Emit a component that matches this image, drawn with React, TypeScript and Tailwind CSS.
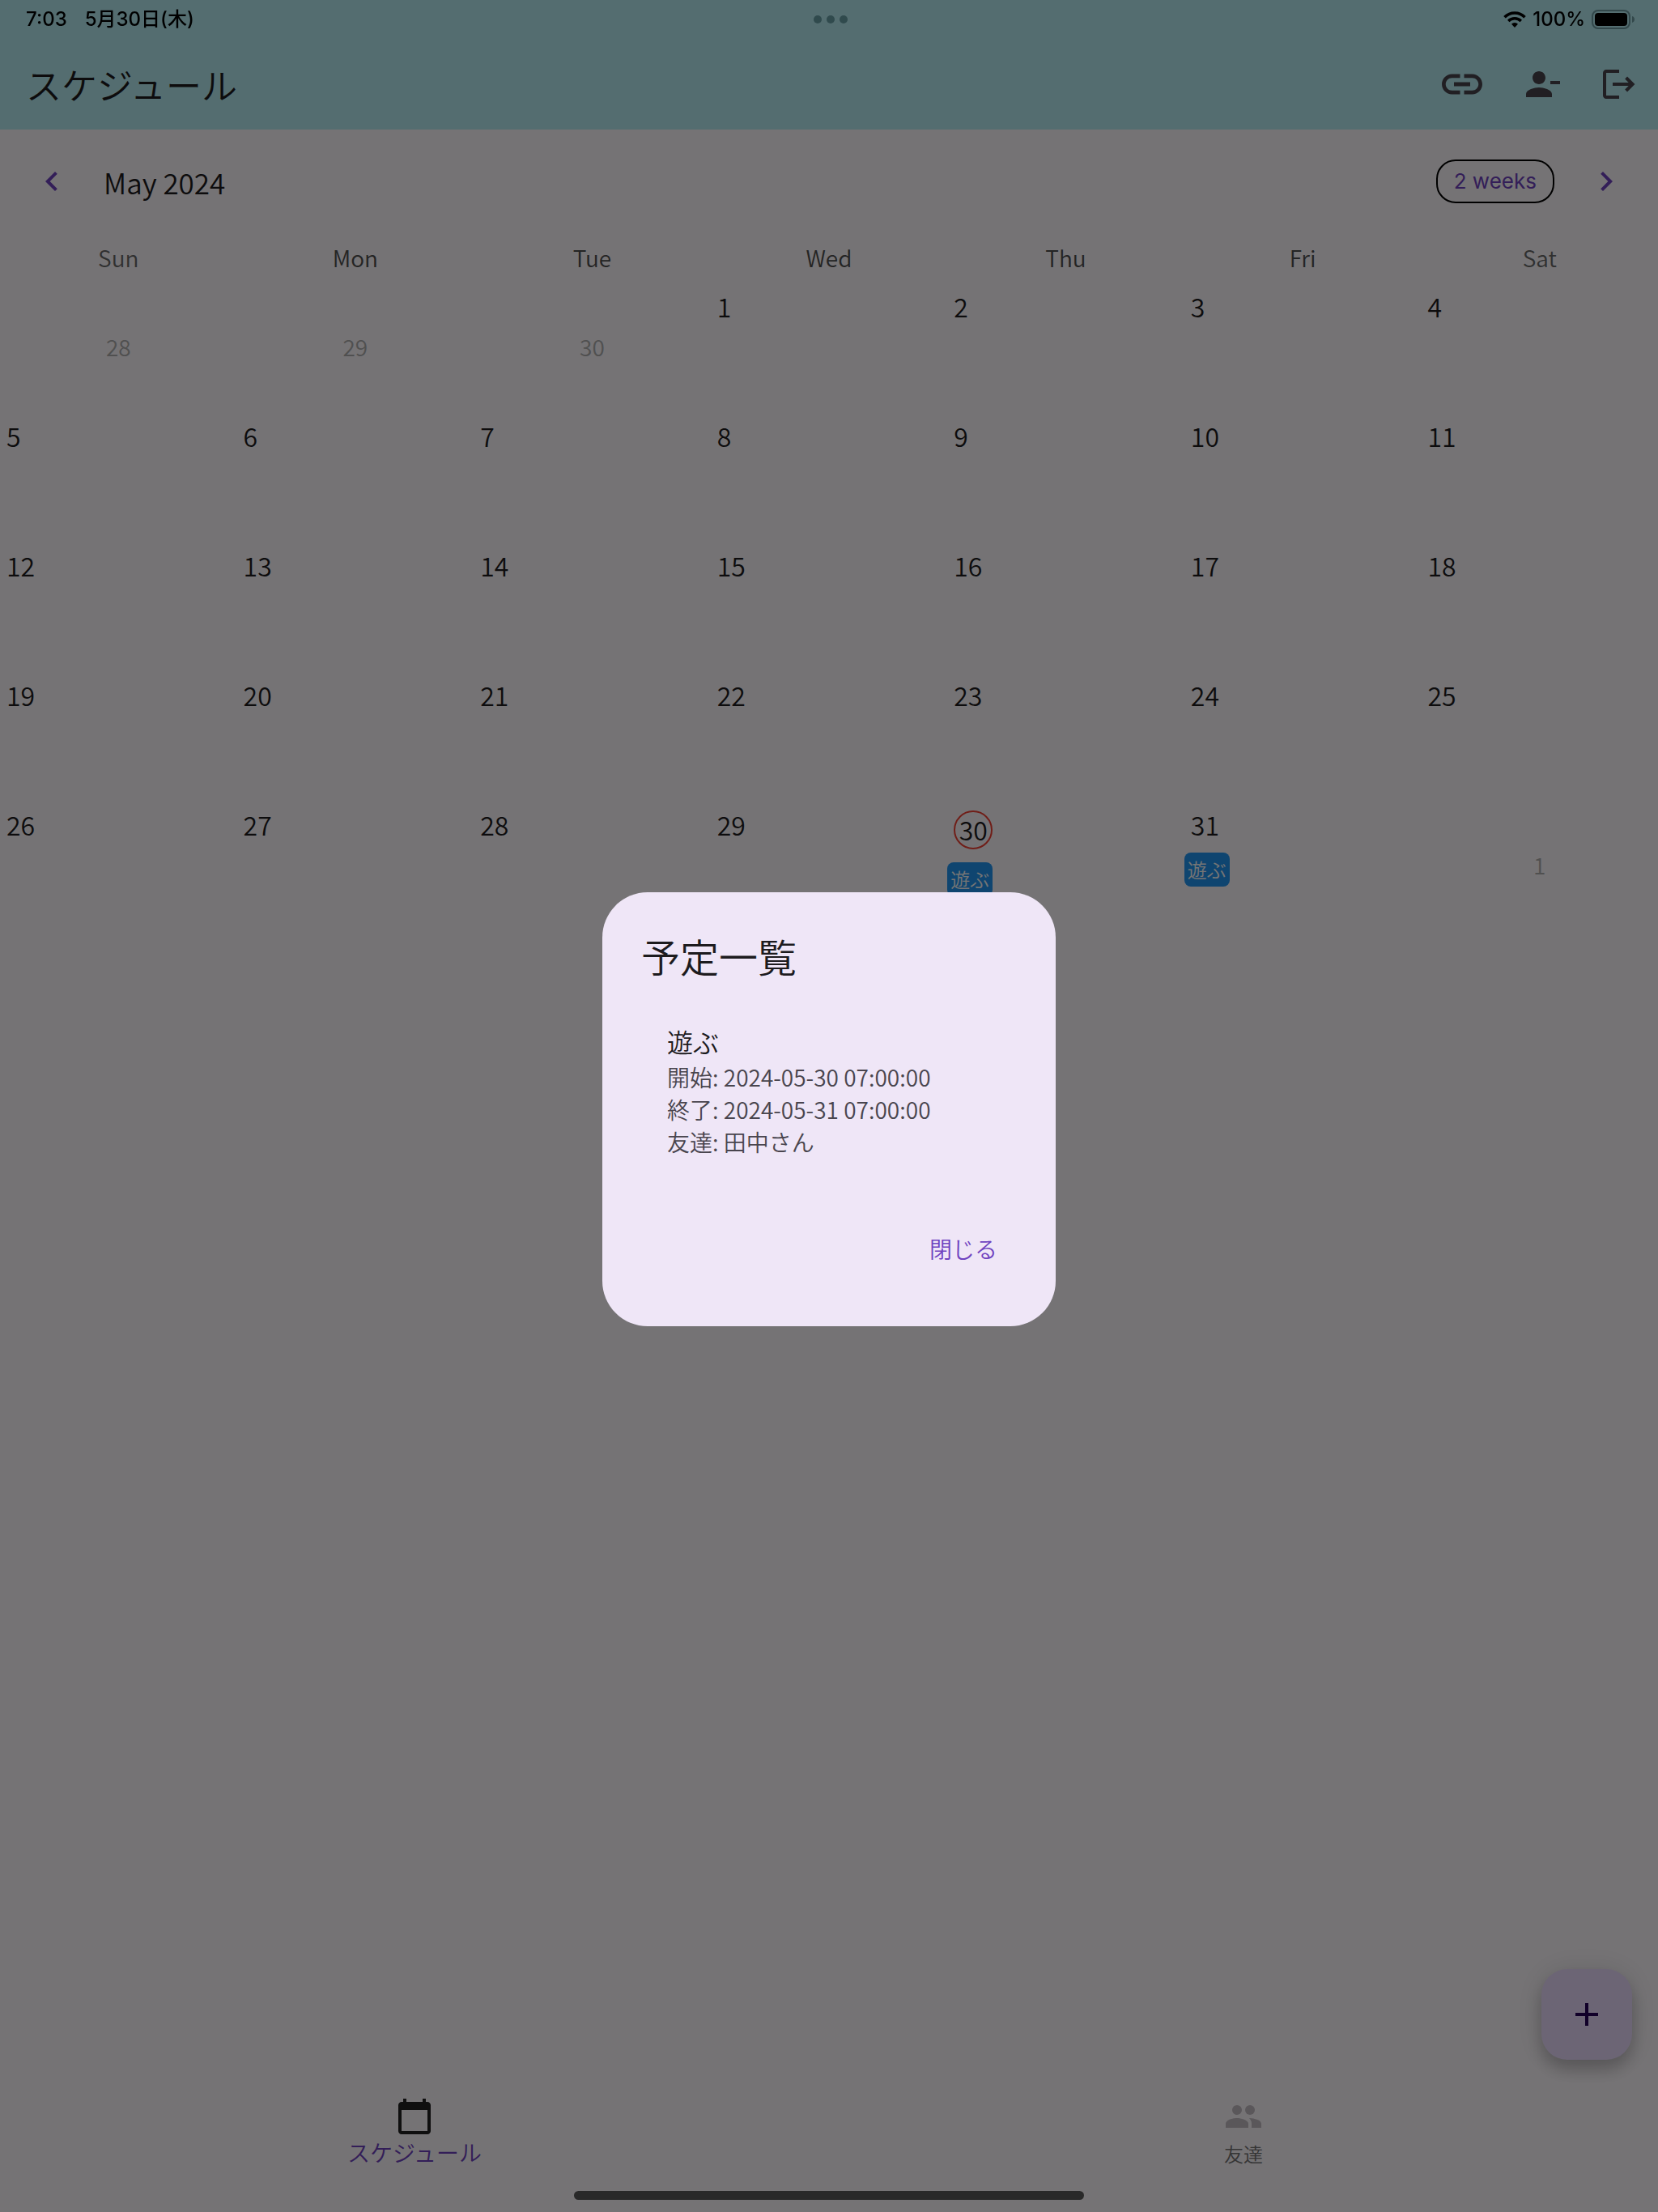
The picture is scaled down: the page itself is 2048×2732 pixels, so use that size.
import type { ReactNode } from "react";

type IconProps = { className?: string };

function Icon({ className, children }: { className?: string; children: ReactNode }) {
  return (
    <svg viewBox="0 0 24 24" fill="currentColor" aria-hidden="true" className={className}>
      {children}
    </svg>
  );
}

const LinkIcon = ({ className }: IconProps) => (
  <Icon className={className}>
    <path d="M3.9 12c0-1.71 1.39-3.1 3.1-3.1h4V7H7c-2.76 0-5 2.24-5 5s2.24 5 5 5h4v-1.9H7c-1.71 0-3.1-1.39-3.1-3.1zM8 13h8v-2H8v2zm9-6h-4v1.9h4c1.71 0 3.1 1.39 3.1 3.1s-1.39 3.1-3.1 3.1h-4V17h4c2.76 0 5-2.24 5-5s-2.24-5-5-5z" />
  </Icon>
);

const PersonRemoveIcon = ({ className }: IconProps) => (
  <Icon className={className}>
    <path d="M14 8c0-2.21-1.79-4-4-4S6 5.79 6 8s1.79 4 4 4 4-1.79 4-4zm3 2v2h6v-2h-6zM2 18v2h16v-2c0-2.66-5.33-4-8-4s-8 1.34-8 4z" />
  </Icon>
);

const LogoutIcon = ({ className }: IconProps) => (
  <Icon className={className}>
    <path d="M13 3H5c-1.1 0-2 .9-2 2v14c0 1.1.9 2 2 2h8v-2H5V5h8z" />
    <path d="M9 12h12.3M17.3 8l4 4-4 4" fill="none" stroke="currentColor" strokeWidth="2" />
  </Icon>
);

const ChevronLeftIcon = ({ className }: IconProps) => (
  <Icon className={className}>
    <path d="M15.41 7.41 14 6l-6 6 6 6 1.41-1.41L10.83 12z" />
  </Icon>
);

const ChevronRightIcon = ({ className }: IconProps) => (
  <Icon className={className}>
    <path d="M10 6 8.59 7.41 13.17 12l-4.58 4.59L10 18l6-6z" />
  </Icon>
);

const AddIcon = ({ className }: IconProps) => (
  <Icon className={className}>
    <path d="M19 13h-6v6h-2v-6H5v-2h6V5h2v6h6z" />
  </Icon>
);

const CalendarIcon = ({ className }: IconProps) => (
  <Icon className={className}>
    <path d="M20 3h-1V1h-2v2H7V1H5v2H4c-1.1 0-2 .9-2 2v16c0 1.1.9 2 2 2h16c1.1 0 2-.9 2-2V5c0-1.1-.9-2-2-2zm0 18H4V8h16v13z" />
  </Icon>
);

const PeopleIcon = ({ className }: IconProps) => (
  <Icon className={className}>
    <path d="M15.500 13.040C16.400 13.900 17 15 17 16.500V19h6v-2.500c0-2.180-4.070-3.360-7.500-3.460z" />
    <circle cx="8" cy="8" r="3" />
    <circle cx="16" cy="8" r="3" />
    <path d="M8 13c-2.330 0-7 1.170-7 3.500V19h14v-2.500c0-2.330-4.670-3.500-7-3.500z" />
  </Icon>
);

function WifiIcon() {
  return (
    <svg viewBox="0 0 28 20" className="h-5 w-7" fill="none" stroke="currentColor" aria-hidden="true">
      <path d="M1.500 7.200a17.600 17.600 0 0 1 25 0" strokeWidth="3.6" />
      <path d="M6.200 12a11 11 0 0 1 15.600 0" strokeWidth="3.4" />
      <path d="M14 20l-4-4.200a5.600 5.600 0 0 1 8 0z" fill="currentColor" stroke="none" />
    </svg>
  );
}

function BatteryIcon() {
  return (
    <svg viewBox="0 0 54 24" className="h-6 w-[54px]" aria-hidden="true">
      <rect x="1" y="1" width="46" height="22" rx="7" fill="none" stroke="#33484b" strokeWidth="2" />
      <rect x="4" y="4" width="40" height="16" rx="4" fill="#000" />
      <path d="M50 8c2 .6 3 2.200 3 4s-1 3.400-3 4z" fill="#33484b" />
    </svg>
  );
}

function StatusBar() {
  return (
    <div className="relative z-30 grid h-12 grid-cols-3 items-center pr-7 pl-8 font-['Inter','Noto_Sans_CJK_JP',sans-serif] text-2xl font-medium text-black">
      <div className="flex gap-[22px]">
        <span>7:03</span>
        <span>5月30日(木)</span>
      </div>
      <div className="flex justify-center gap-1.5">
        <span className="size-2.5 rounded-full bg-[#304a4d]" />
        <span className="size-2.5 rounded-full bg-[#304a4d]" />
        <span className="size-2.5 rounded-full bg-[#304a4d]" />
      </div>
      <div className="flex items-center justify-end gap-2">
        <WifiIcon />
        <span>100%</span>
        <BatteryIcon />
      </div>
    </div>
  );
}

const weekdays = ["Sun", "Mon", "Tue", "Wed", "Thu", "Fri", "Sat"];

type Day = { date: number; outside?: boolean };

const days: Day[] = [
  ...[28, 29, 30].map((date) => ({ date, outside: true })),
  ...Array.from({ length: 31 }, (_, i) => ({ date: i + 1 })),
  { date: 1, outside: true },
];

const weeks = Array.from({ length: 5 }, (_, i) => days.slice(i * 7, i * 7 + 7));
const today = 30;
const events: Record<number, string> = { 30: "遊ぶ", 31: "遊ぶ" };

function DayCell({ day }: { day: Day }) {
  if (day.outside) {
    return <td className="h-40 pb-1 text-center align-middle text-[28px] text-[#aeaeae]">{day.date}</td>;
  }
  const event = events[day.date];
  return (
    <td className="h-40 align-top text-[#1d1b1e]">
      {day.date === today ? (
        <div className="mt-[11px] mb-4 ml-2 flex size-12 items-center justify-center rounded-full border-2 border-[#f44336] pb-0.5 text-[32px] leading-10">
          {day.date}
        </div>
      ) : (
        <div className="mb-[15px] pt-2 pl-2 text-[32px] leading-10">{day.date}</div>
      )}
      {event && (
        <span className="block h-[42px] w-fit rounded-lg bg-[#2196f3] px-1 text-2xl leading-[42px] text-white">
          {event}
        </span>
      )}
    </td>
  );
}

function Calendar() {
  return (
    <main className="flex-1">
      <div className="flex h-32 items-center pr-10 pl-10">
        <button type="button" aria-label="前の月" className="text-[#6f43c0]">
          <ChevronLeftIcon className="size-12" />
        </button>
        <h2 className="ml-10 flex-1 pt-0.5 text-[35px] leading-12 text-[#1d1b1e]">May 2024</h2>
        <button
          type="button"
          className="mr-10 h-[54px] rounded-3xl border-2 border-black px-5 font-['Inter',sans-serif] text-[26px] leading-8 font-normal text-[#6f43c0]"
        >
          2 weeks
        </button>
        <button type="button" aria-label="次の月" className="text-[#6f43c0]">
          <ChevronRightIcon className="size-12" />
        </button>
      </div>
      <table className="w-full table-fixed border-collapse">
        <thead>
          <tr>
            {weekdays.map((name, i) => (
              <th
                key={name}
                scope="col"
                className={
                  i === 0 || i === 6
                    ? "h-[62px] pb-0.5 text-[28px] font-[350] text-[#6a6a6a]"
                    : "h-[62px] pb-0.5 text-[28px] font-[350] text-[#4f4f4f]"
                }
              >
                {name}
              </th>
            ))}
          </tr>
        </thead>
        <tbody>
          {weeks.map((week, i) => (
            <tr key={i}>
              {week.map((day, j) => (
                <DayCell key={j} day={day} />
              ))}
            </tr>
          ))}
        </tbody>
      </table>
    </main>
  );
}

function EventDialog() {
  return (
    <div className="fixed inset-0 z-20 flex items-center justify-center bg-black/54 pt-12 pb-10">
      <div
        role="dialog"
        aria-modal="true"
        aria-labelledby="dialog-title"
        className="flex w-[560px] flex-col rounded-[56px] bg-[#efe6f7] px-12 pt-12 pb-14"
      >
        <h2 id="dialog-title" className="text-5xl leading-15 text-[#1d1b1e]">
          予定一覧
        </h2>
        <div className="mt-[52px] px-8">
          <h3 className="text-[32px] leading-12 text-[#1d1b1e]">遊ぶ</h3>
          <p className="text-[28px] leading-10 whitespace-nowrap text-[#49454e]">開始: 2024-05-30 07:00:00</p>
          <p className="text-[28px] leading-10 whitespace-nowrap text-[#49454e]">終了: 2024-05-31 07:00:00</p>
          <p className="text-[28px] leading-10 whitespace-nowrap text-[#49454e]">友達: 田中さん</p>
        </div>
        <button type="button" className="mt-[72px] h-20 self-end px-6 text-[28px] text-[#6f43c0]">
          閉じる
        </button>
      </div>
    </div>
  );
}

export default function App() {
  return (
    <div className="flex min-h-screen flex-col bg-[#fffbff] font-['Noto_Sans_CJK_JP',sans-serif] font-[350]">
      <header className="bg-[#b7edf3]">
        <StatusBar />
        <div className="flex h-28 items-center justify-between pr-[26px] pl-8">
          <h1 className="text-[44px] leading-16 text-[#1d1b1e]">スケジュール</h1>
          <div className="flex items-center gap-[45px] text-[#49454e]">
            <button type="button" aria-label="リンク">
              <LinkIcon className="size-15" />
            </button>
            <button type="button" aria-label="アカウント削除">
              <PersonRemoveIcon className="size-12" />
            </button>
            <button type="button" aria-label="ログアウト">
              <LogoutIcon className="size-12" />
            </button>
          </div>
        </div>
      </header>

      <Calendar />

      <button
        type="button"
        aria-label="予定を追加"
        className="fixed right-8 bottom-[188px] z-10 flex size-28 items-center justify-center rounded-[32px] bg-[#ebddff] text-[#250059] shadow-[0_12px_20px_rgba(0,0,0,0.2),0_2px_36px_rgba(0,0,0,0.12)]"
      >
        <AddIcon className="size-12" />
      </button>

      <nav className="grid h-[156px] grid-cols-2 pt-[14px]">
        <a href="#schedule" aria-current="page" className="flex flex-col items-center">
          <CalendarIcon className="size-12 text-[#222222]" />
          <span className="text-[28px] leading-10 text-[#6f43c0]">スケジュール</span>
        </a>
        <a href="#friends" className="flex flex-col items-center">
          <PeopleIcon className="size-12 text-[#c4bdc4]" />
          <span className="mt-0.5 text-2xl leading-10 text-[#757375]">友達</span>
        </a>
      </nav>

      <EventDialog />
      <div className="fixed bottom-[15px] left-1/2 z-30 h-[11px] w-[630px] -translate-x-1/2 rounded-full bg-[#292929]" />
    </div>
  );
}
